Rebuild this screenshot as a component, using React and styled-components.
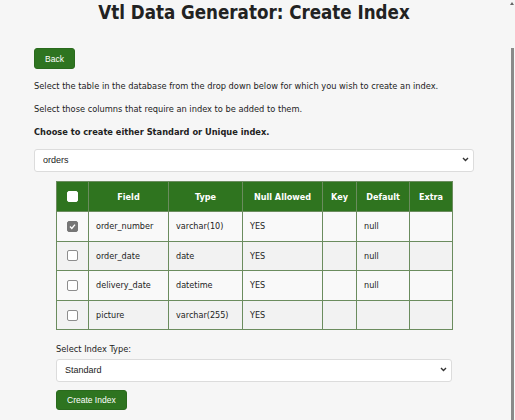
import React from 'react'
import styled, { createGlobalStyle } from 'styled-components'

const GlobalStyle = createGlobalStyle`
    html, body {
        margin: 0;
        padding: 0;
        background: #f6f6f6;
        overflow: hidden;
    }
    body {
        font-family: "DejaVu Sans Condensed", "DejaVu Sans", sans-serif;
        color: #222;
    }
`

const Page = styled.div`
    width: 508px;
    height: 420px;
    padding: 0;
    box-sizing: border-box;
`

const Title = styled.h1`
    margin: 0;
    padding-top: 2px;
    height: 48px;
    box-sizing: border-box;
    text-align: center;
    font-size: 18.6px;
    font-weight: bold;
    color: #222;
`

const Content = styled.div`
    padding: 0 34px;
`

const Button = styled.button`
    display: block;
    background: #2e7420;
    color: #fff;
    border: 1px solid #2a6a1d;
    border-radius: 3px;
    font-family: "Liberation Sans", Arial, sans-serif;
    font-size: 8.5px;
    height: ${props => props.h || 21}px;
    padding: 0 ${props => props.px || 10}px;
    margin-top: ${props => props.top || 0}px;
    cursor: pointer;
`

const Text = styled.p`
    margin: ${props => props.top || 0}px 0 0 0;
    font-size: 9.2px;
    line-height: 12px;
    font-weight: ${props => (props.bold ? 'bold' : 'normal')};
`

const SelectWrap = styled.div`
    position: relative;
    margin-top: ${props => props.top || 0}px;
    height: 23px;
`

const Select = styled.select`
    appearance: none;
    width: 100%;
    height: 23px;
    box-sizing: border-box;
    background: #fff;
    border: 1px solid #dcdcdc;
    border-radius: 3px;
    padding: 0 8px;
    font-family: "Liberation Sans", Arial, sans-serif;
    font-size: 9px;
    color: #222;
    outline: none;
`

const Chevron = styled.svg`
    position: absolute;
    right: 5px;
    top: 9px;
    pointer-events: none;
`

const Indent = styled.div`
    padding: 0 22px;
`

const Table = styled.table`
    margin-top: 10px;
    width: 396px;
    border-collapse: collapse;
    table-layout: fixed;
    font-size: 9px;

    th, td {
        border: 1px solid #6b8c5e;
        height: 29.6px;
        padding: 0 7px;
        box-sizing: border-box;
    }

    th {
        background: #2f741f;
        color: #fff;
        font-weight: bold;
        text-align: center;
        height: 30px;
    }

    tbody tr:nth-child(odd) td {
        background: #f9f9f9;
    }
    tbody tr:nth-child(even) td {
        background: #f2f2f2;
    }
`

const BoxCell = styled.td`
    text-align: center;
`

const Box = styled.span`
    display: inline-block;
    vertical-align: middle;
    width: 11px;
    height: 11px;
    box-sizing: border-box;
    border-radius: 2px;
    background: ${props => (props.checked ? '#767676' : '#fff')};
    border: 1px solid ${props => (props.checked ? '#767676' : props.head ? '#fff' : '#8d8d8d')};
    position: relative;

    svg {
        position: absolute;
        left: 0;
        top: 0;
    }
`

const Label = styled.div`
    margin-top: 13px;
    font-size: 9.2px;
    line-height: 12px;
`

const ScrollThumb = styled.div`
    position: fixed;
    right: 1px;
    top: 48px;
    width: 3px;
    height: 372px;
    background: #8a8a8a;
`

const ScrollArrow = styled.div`
    position: fixed;
    right: 1px;
    top: 2px;
    width: 0;
    height: 0;
    border-left: 2px solid transparent;
    border-right: 2px solid transparent;
    border-bottom: 3px solid #666;
`

const rows = [
    { field: 'order_number', type: 'varchar(10)', nul: 'YES', def: 'null', checked: true },
    { field: 'order_date', type: 'date', nul: 'YES', def: 'null' },
    { field: 'delivery_date', type: 'datetime', nul: 'YES', def: 'null' },
    { field: 'picture', type: 'varchar(255)', nul: 'YES', def: '' },
]

const Down = () => (
    <Chevron width="7" height="5" viewBox="0 0 7 5">
        <path d="M1 1 L3.5 3.5 L6 1" fill="none" stroke="#333" strokeWidth="1.4" />
    </Chevron>
)

const Check = ({ checked, head }) => (
    <Box checked={checked} head={head}>
        {checked && (
            <svg width="9" height="9" viewBox="0 0 9 9">
                <path d="M2 4.6 L3.8 6.4 L7 2.6" fill="none" stroke="#fff" strokeWidth="1.4" />
            </svg>
        )}
    </Box>
)

const App = () => {
    return (
        <Page>
            <GlobalStyle />
            <Title>Vtl Data Generator: Create Index</Title>
            <Content>
                <Button>Back</Button>
                <Text top={11}>Select the table in the database from the drop down below for which you wish to create an index.</Text>
                <Text top={11}>Select those columns that require an index to be added to them.</Text>
                <Text top={11} bold>Choose to create either Standard or Unique index.</Text>
                <SelectWrap top={10}>
                    <Select defaultValue="orders">
                        <option>orders</option>
                    </Select>
                    <Down />
                </SelectWrap>
                <Indent>
                    <Table>
                        <colgroup>
                            <col style={{ width: 32 }} />
                            <col style={{ width: 80 }} />
                            <col style={{ width: 74 }} />
                            <col style={{ width: 80 }} />
                            <col style={{ width: 34 }} />
                            <col style={{ width: 53 }} />
                            <col style={{ width: 43 }} />
                        </colgroup>
                        <thead>
                            <tr>
                                <th><Check head /></th>
                                <th>Field</th>
                                <th>Type</th>
                                <th>Null Allowed</th>
                                <th>Key</th>
                                <th>Default</th>
                                <th>Extra</th>
                            </tr>
                        </thead>
                        <tbody>
                            {rows.map(r => (
                                <tr key={r.field}>
                                    <BoxCell><Check checked={r.checked} /></BoxCell>
                                    <td>{r.field}</td>
                                    <td>{r.type}</td>
                                    <td>{r.nul}</td>
                                    <td></td>
                                    <td>{r.def}</td>
                                    <td></td>
                                </tr>
                            ))}
                        </tbody>
                    </Table>
                    <Label>Select Index Type:</Label>
                    <SelectWrap top={3}>
                        <Select defaultValue="Standard">
                            <option>Standard</option>
                            <option>Unique</option>
                        </Select>
                        <Down />
                    </SelectWrap>
                    <Button h={20} px={10} top={9}>Create Index</Button>
                </Indent>
            </Content>
            <ScrollArrow />
            <ScrollThumb />
        </Page>
    )
}

export default App
